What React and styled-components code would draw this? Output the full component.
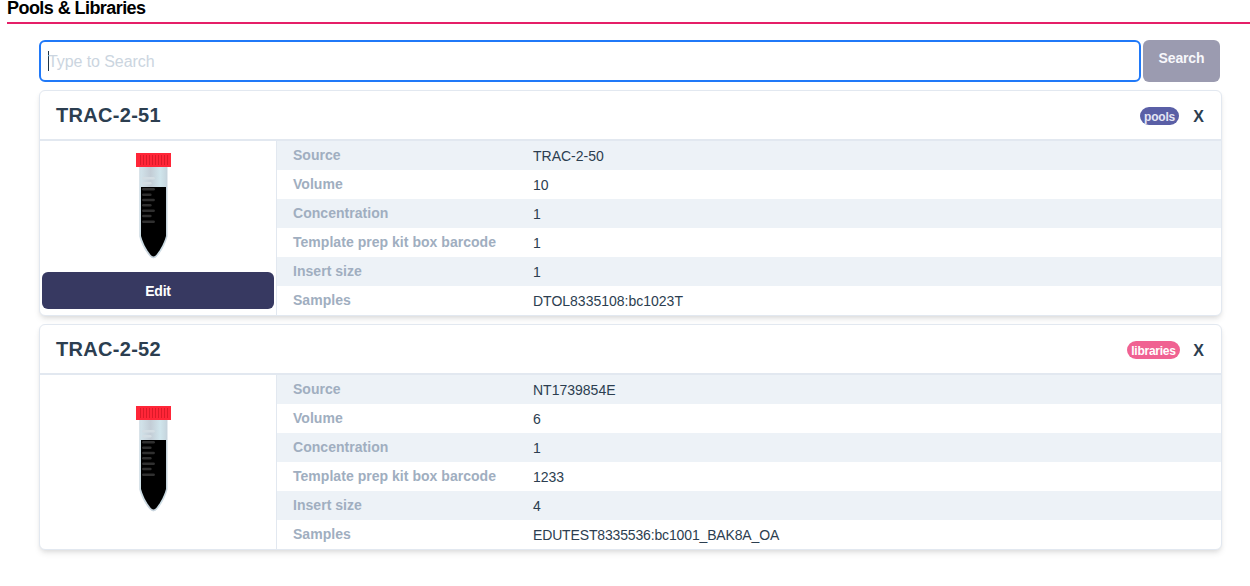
import React from "react";
import styled, { createGlobalStyle } from "styled-components";

const GlobalStyle = createGlobalStyle`
  *, *::before, *::after { box-sizing: border-box; }
  body {
    margin: 0;
    background: #fff;
    color: #2c3e50;
    font-family: "Liberation Sans", Arial, Helvetica, sans-serif;
  }
`;

const Page = styled.main`
  display: flex;
  flex-direction: column;
  min-height: 100vh;
  padding-left: 7px;
`;

const PageTitle = styled.h1`
  margin: 0;
  height: 24px;
  padding-top: 1px;
  border-bottom: 2px solid #e51f68;
  color: #000;
  font-size: 18px;
  line-height: 14px;
  font-weight: 700;
  letter-spacing: -0.56px;
`;

const Content = styled.section`
  display: flex;
  flex-direction: column;
  gap: 8px;
  width: 1183px;
  margin: 16px 0 0 32px;
`;

const SearchBar = styled.form`
  display: flex;
  gap: 2px;
  height: 42px;
  padding-right: 2px;
`;

const SearchInput = styled.div`
  display: flex;
  align-items: center;
  flex: 1;
  padding: 0 7px;
  border: 2px solid #2079f8;
  border-radius: 6px;
  background: #fff;
`;

const Caret = styled.span`
  width: 1px;
  height: 20px;
  margin-right: -1px;
  background: #1f3547;
`;

const Placeholder = styled.span`
  padding-top: 2px;
  color: #cbd5e0;
  font-size: 16px;
  line-height: 20px;
  letter-spacing: -0.08px;
`;

const SearchButton = styled.button`
  width: 77px;
  padding: 0 0 6px;
  border: 0;
  border-radius: 6px;
  background: #9b9bb0;
  color: #f7f7fb;
  font: 700 14px/20px "Liberation Sans", Arial, sans-serif;
  letter-spacing: -0.15px;
`;

const Card = styled.article`
  height: 226px;
  border: 1px solid #e2e8f0;
  border-radius: 6px;
  background: #fff;
  box-shadow: 0 4px 6px -1px rgba(0, 0, 0, 0.1), 0 2px 4px -1px rgba(0, 0, 0, 0.06);
  overflow: hidden;
`;

const CardHeader = styled.header`
  display: flex;
  align-items: center;
  justify-content: space-between;
  height: 50px;
  padding: 0 16px;
  border-bottom: 2px solid #e2e8f0;
`;

const CardTitle = styled.h2`
  margin: 0;
  font-size: 20px;
  line-height: 28px;
  font-weight: 700;
  letter-spacing: 0.3px;
`;

const HeaderActions = styled.div`
  display: flex;
  align-items: center;
  gap: ${({ $kind }) => ($kind === "pools" ? "14px" : "13px")};
  padding: 2px 1px 0 0;
`;

const Badge = styled.span`
  display: flex;
  align-items: center;
  justify-content: center;
  width: ${({ $kind }) => ($kind === "pools" ? "39px" : "53px")};
  height: 18px;
  padding-top: 1px;
  border-radius: 9px;
  background: ${({ $kind }) => ($kind === "pools" ? "#5a5fa6" : "#f06292")};
  color: ${({ $kind }) => ($kind === "pools" ? "#e4e4f4" : "#fff")};
  font-size: 12px;
  line-height: 16px;
  font-weight: 700;
  letter-spacing: ${({ $kind }) => ($kind === "pools" ? "-0.2px" : "-0.25px")};
`;

const CloseButton = styled.button`
  width: 11px;
  padding: 2px 0 0;
  border: 0;
  background: none;
  color: #2c3e50;
  font: 700 16px/18px "Liberation Sans", Arial, sans-serif;
`;

const CardBody = styled.div`
  display: grid;
  grid-template-columns: 237px 1fr;
  height: 174px;
`;

const TubePanel = styled.div`
  display: flex;
  flex-direction: column;
  align-items: center;
  justify-content: ${({ $editable }) => ($editable ? "space-between" : "center")};
  padding: ${({ $editable }) => ($editable ? "12px 2px 6px" : "0 2px 6px")};
  border-right: 1px solid #e2e8f0;
`;

const TubeDrawing = styled.svg`
  display: block;
  width: 36px;
  height: 106px;
  margin-right: 9px;
`;

const EditButton = styled.button`
  width: 100%;
  height: 37px;
  padding: 0;
  border: 0;
  border-radius: 6px;
  background: #373961;
  color: #fff;
  font: 700 14px/20px "Liberation Sans", Arial, sans-serif;
  letter-spacing: -0.25px;
`;

const Details = styled.dl`
  margin: 0;
`;

const DetailRow = styled.div`
  display: grid;
  grid-template-columns: 240px 1fr;
  height: 29px;
  padding: 0 16px;
  &:nth-child(odd) { background: #edf2f7; }
`;

const Label = styled.dt`
  color: #a0aec0;
  font-size: 14px;
  line-height: 29px;
  font-weight: 700;
  letter-spacing: 0.035px;
`;

const Value = styled.dd`
  margin: 0;
  padding-top: 1px;
  font-size: 14px;
  line-height: 29px;
  letter-spacing: ${({ $tight }) => ($tight ? "-0.15px" : "normal")};
`;

const TICKS = [25.3, 30.3, 36.3, 41.7, 47, 52.3, 57.7, 63, 68.7];
const RIDGES = [4, 7, 10, 13, 16, 19, 22, 25, 28, 31];

function Tube({ id }) {
  return (
    <TubeDrawing viewBox="0 0 36 106" aria-hidden="true">
      <defs>
        <linearGradient id={id}>
          <stop offset="0" stopColor="#d3e5ec" />
          <stop offset="0.4" stopColor="#c3cdd6" />
          <stop offset="0.75" stopColor="#d0e5ec" />
          <stop offset="1" stopColor="#c5d4dc" />
        </linearGradient>
      </defs>
      <path
        d="M3.7 13H31.1V83.5C28.5 93 23.5 100.5 20 104Q17.4 106 14.8 104C11.3 100.5 6.3 93 3.7 83.5Z"
        fill={`url(#${id})`}
        stroke="#c5d3dc"
        strokeWidth="0.7"
      />
      <path
        d="M5 34H30V83C27.5 92 23 99 19.4 102.7Q17.5 104.3 15.6 102.7C12 99 7.5 92 5 83Z"
        fill="#000"
      />
      {TICKS.map((y, i) => (
        <path
          key={y}
          d={`M7.3 ${y}H${i % 2 ? 14.4 : 17.7}`}
          stroke={i < 2 ? "#d3dde3" : "#303030"}
          strokeWidth="2.4"
          strokeLinecap="round"
        />
      ))}
      <rect width="35" height="14" fill="#ff2638" />
      {RIDGES.map((x) => (
        <path key={x} d={`M${x + 0.5} 2V12`} stroke="#dc1a29" strokeWidth="1" />
      ))}
    </TubeDrawing>
  );
}

const ITEMS = [
  {
    barcode: "TRAC-2-51",
    kind: "pools",
    details: [
      ["Source", "TRAC-2-50"],
      ["Volume", "10"],
      ["Concentration", "1"],
      ["Template prep kit box barcode", "1"],
      ["Insert size", "1"],
      ["Samples", "DTOL8335108:bc1023T"],
    ],
  },
  {
    barcode: "TRAC-2-52",
    kind: "libraries",
    details: [
      ["Source", "NT1739854E"],
      ["Volume", "6"],
      ["Concentration", "1"],
      ["Template prep kit box barcode", "1233"],
      ["Insert size", "4"],
      ["Samples", "EDUTEST8335536:bc1001_BAK8A_OA"],
    ],
  },
];

function ItemCard({ item }) {
  const editable = item.kind === "pools";
  return (
    <Card>
      <CardHeader>
        <CardTitle>{item.barcode}</CardTitle>
        <HeaderActions $kind={item.kind}>
          <Badge $kind={item.kind}>{item.kind}</Badge>
          <CloseButton type="button">X</CloseButton>
        </HeaderActions>
      </CardHeader>
      <CardBody>
        <TubePanel $editable={editable}>
          <Tube id={`glass-${item.kind}`} />
          {editable && <EditButton type="button">Edit</EditButton>}
        </TubePanel>
        <Details>
          {item.details.map(([label, value]) => (
            <DetailRow key={label}>
              <Label>{label}</Label>
              <Value $tight={value.length > 24}>{value}</Value>
            </DetailRow>
          ))}
        </Details>
      </CardBody>
    </Card>
  );
}

export default function App() {
  return (
    <>
      <GlobalStyle />
      <Page>
        <PageTitle>Pools &amp; Libraries</PageTitle>
        <Content>
          <SearchBar>
            <SearchInput>
              <Caret />
              <Placeholder>Type to Search</Placeholder>
            </SearchInput>
            <SearchButton type="button">Search</SearchButton>
          </SearchBar>
          {ITEMS.map((item) => (
            <ItemCard key={item.barcode} item={item} />
          ))}
        </Content>
      </Page>
    </>
  );
}
